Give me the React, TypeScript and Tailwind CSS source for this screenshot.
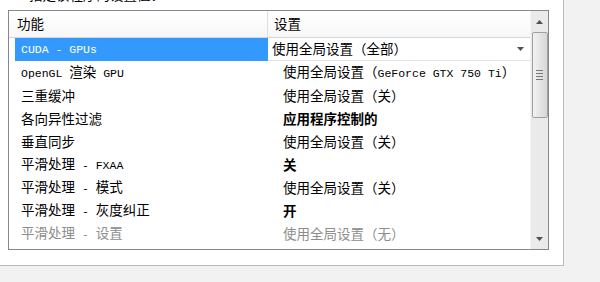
import React from "react";

// splits text so Latin runs get the narrow mono face like the SimSun list
const Txt = ({ s }: { s: string }) => (
  <>
    {s.split(/([\x20-\x7e]+)/).map((p, i) =>
      /^[\x20-\x7e]+$/.test(p) ? (
        <span key={i} className="font-['Liberation_Mono'] text-[11.5px]">
          {p}
        </span>
      ) : (
        <React.Fragment key={i}>{p}</React.Fragment>
      )
    )}
  </>
);

type Row = { name: string; value: string; bold?: boolean; muted?: boolean };

const rows: Row[] = [
  { name: "OpenGL 渲染 GPU", value: "使用全局设置（GeForce GTX 750 Ti）" },
  { name: "三重缓冲", value: "使用全局设置（关）" },
  { name: "各向异性过滤", value: "应用程序控制的", bold: true },
  { name: "垂直同步", value: "使用全局设置（关）" },
  { name: "平滑处理 - FXAA", value: "关", bold: true },
  { name: "平滑处理 - 模式", value: "使用全局设置（关）" },
  { name: "平滑处理 - 灰度纠正", value: "开", bold: true },
  { name: "平滑处理 - 设置", value: "使用全局设置（无）", muted: true },
  { name: "平滑处理 - 透明度", value: "使用全局设置（关）", muted: true },
];

const Arrow = ({ up }: { up?: boolean }) => (
  <svg width="7" height="4" viewBox="0 0 7 4">
    <path d={up ? "M3.5 0 L7 4 L0 4 Z" : "M0 0 L7 0 L3.5 4 Z"} fill="#505050" />
  </svg>
);

export default function App() {
  return (
    <div className="w-[600px] h-[282px] bg-[#f2f2f2] overflow-hidden font-['Noto_Sans_CJK_SC',sans-serif] text-[13.5px] text-black leading-none">
      <div className="w-[564px] h-[266px] bg-white border-r border-b border-[#b9b9b9] relative overflow-hidden">
        <div className="absolute left-[29px] top-[-12px] text-[13.5px] text-black">
          指定该程序的设置值：
        </div>
        <div className="absolute left-[8px] top-[10px] w-[541px] h-[240px] border border-[#828790] flex overflow-hidden">
          <div className="flex-1 flex flex-col overflow-hidden">
            {/* header */}
            <div className="h-[27px] shrink-0 flex border-b border-[#d5d5d5] bg-gradient-to-b from-white to-[#f7f7f7]">
              <div className="w-[259px] border-r border-[#dedede] pl-[8px] flex items-center">功能</div>
              <div className="flex-1 pl-[6px] flex items-center">设置</div>
            </div>
            {/* selected row */}
            <div className="h-[23px] shrink-0 flex">
              <div className="w-[259px] pl-[6px]">
                <div className="h-full bg-[#3399ff] text-white pl-[6px] flex items-center">
                  <Txt s="CUDA - GPUs" />
                </div>
              </div>
              <div className="flex-1 border-b border-[#e3e3e3] pl-[4px] pr-[6px] flex items-center justify-between">
                <span>使用全局设置（全部）</span>
                <Arrow />
              </div>
            </div>
            {rows.map((r) => (
              <div
                key={r.name}
                className={`h-[23px] shrink-0 flex items-center ${r.muted ? "text-[#8d8d8d]" : ""}`}
              >
                <div className="w-[259px] pl-[12px]">
                  <Txt s={r.name} />
                </div>
                <div className={`flex-1 pl-[15px] ${r.bold ? "font-bold" : ""}`}>
                  <Txt s={r.value} />
                </div>
              </div>
            ))}
          </div>
          {/* scrollbar */}
          <div className="w-[18px] shrink-0 bg-[#eaeaea] flex flex-col items-center border-l border-[#f4f4f4]">
            <div className="h-[21px] w-full flex items-center justify-center">
              <Arrow up />
            </div>
            <div className="w-[16px] h-[86px] rounded-[2px] border border-[#a0a0a0] bg-gradient-to-r from-[#f2f2f2] via-[#e4e4e4] to-[#d8d8d8] flex flex-col items-center justify-center gap-[2px]">
              <div className="w-[7px] h-px bg-[#777]" />
              <div className="w-[7px] h-px bg-[#777]" />
              <div className="w-[7px] h-px bg-[#777]" />
              <div className="w-[7px] h-px bg-[#777]" />
            </div>
            <div className="flex-1" />
            <div className="h-[21px] w-full flex items-center justify-center">
              <Arrow />
            </div>
          </div>
        </div>
      </div>
    </div>
  );
}
